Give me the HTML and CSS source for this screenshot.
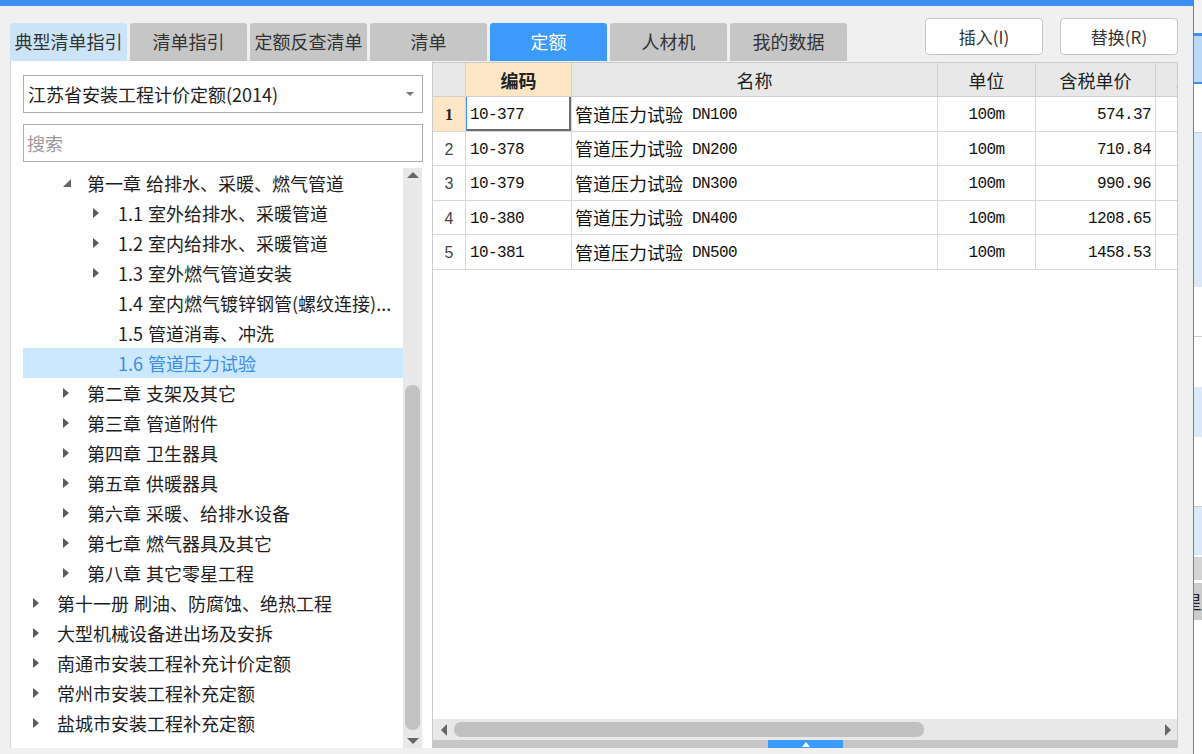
FILE: index.html
```html
<!DOCTYPE html>
<html lang="zh-CN">
<head>
<meta charset="utf-8">
<title>定额</title>
<link rel="stylesheet" href="styles.css">
</head>
<body>
<div class="screen">
  <div class="app">
    <div class="topbar"></div>
    <div class="toolbar">
      <div class="tabs">
        <div class="tab tab-light">典型清单指引</div>
        <div class="tab">清单指引</div>
        <div class="tab">定额反查清单</div>
        <div class="tab">清单</div>
        <div class="tab tab-active">定额</div>
        <div class="tab">人材机</div>
        <div class="tab">我的数据</div>
      </div>
      <div class="actions">
        <button class="btn">插入(I)</button>
        <button class="btn">替换(R)</button>
      </div>
    </div>
    <div class="main">
      <div class="left">
        <div class="select">
          <span>江苏省安装工程计价定额(2014)</span>
          <svg class="caret" width="8" height="4" viewBox="0 0 8 4"><path d="M0 0H8L4 4Z" fill="#777"/></svg>
        </div>
        <div class="search">搜索</div>
        <div class="treewrap">
          <div class="tree">
            <div class="trow l1"><span class="tw"><svg width="8" height="8" viewBox="0 0 8 8"><path d="M8 0V8H0Z" fill="#666"/></svg></span>第一章 给排水、采暖、燃气管道</div>
            <div class="trow l2"><span class="tw"><svg width="6" height="10" viewBox="0 0 6 10"><path d="M0 0L6 5L0 10Z" fill="#5c5c5c"/></svg></span>1.1 室外给排水、采暖管道</div>
            <div class="trow l2"><span class="tw"><svg width="6" height="10" viewBox="0 0 6 10"><path d="M0 0L6 5L0 10Z" fill="#5c5c5c"/></svg></span>1.2 室内给排水、采暖管道</div>
            <div class="trow l2"><span class="tw"><svg width="6" height="10" viewBox="0 0 6 10"><path d="M0 0L6 5L0 10Z" fill="#5c5c5c"/></svg></span>1.3 室外燃气管道安装</div>
            <div class="trow l2"><span class="tw"></span>1.4 室内燃气镀锌钢管(螺纹连接)...</div>
            <div class="trow l2"><span class="tw"></span>1.5 管道消毒、冲洗</div>
            <div class="trow l2 sel"><span class="tw"></span>1.6 管道压力试验</div>
            <div class="trow l1"><span class="tw"><svg width="6" height="10" viewBox="0 0 6 10"><path d="M0 0L6 5L0 10Z" fill="#5c5c5c"/></svg></span>第二章 支架及其它</div>
            <div class="trow l1"><span class="tw"><svg width="6" height="10" viewBox="0 0 6 10"><path d="M0 0L6 5L0 10Z" fill="#5c5c5c"/></svg></span>第三章 管道附件</div>
            <div class="trow l1"><span class="tw"><svg width="6" height="10" viewBox="0 0 6 10"><path d="M0 0L6 5L0 10Z" fill="#5c5c5c"/></svg></span>第四章 卫生器具</div>
            <div class="trow l1"><span class="tw"><svg width="6" height="10" viewBox="0 0 6 10"><path d="M0 0L6 5L0 10Z" fill="#5c5c5c"/></svg></span>第五章 供暖器具</div>
            <div class="trow l1"><span class="tw"><svg width="6" height="10" viewBox="0 0 6 10"><path d="M0 0L6 5L0 10Z" fill="#5c5c5c"/></svg></span>第六章 采暖、给排水设备</div>
            <div class="trow l1"><span class="tw"><svg width="6" height="10" viewBox="0 0 6 10"><path d="M0 0L6 5L0 10Z" fill="#5c5c5c"/></svg></span>第七章 燃气器具及其它</div>
            <div class="trow l1"><span class="tw"><svg width="6" height="10" viewBox="0 0 6 10"><path d="M0 0L6 5L0 10Z" fill="#5c5c5c"/></svg></span>第八章 其它零星工程</div>
            <div class="trow l0"><span class="tw"><svg width="6" height="10" viewBox="0 0 6 10"><path d="M0 0L6 5L0 10Z" fill="#5c5c5c"/></svg></span>第十一册 刷油、防腐蚀、绝热工程</div>
            <div class="trow l0"><span class="tw"><svg width="6" height="10" viewBox="0 0 6 10"><path d="M0 0L6 5L0 10Z" fill="#5c5c5c"/></svg></span>大型机械设备进出场及安拆</div>
            <div class="trow l0"><span class="tw"><svg width="6" height="10" viewBox="0 0 6 10"><path d="M0 0L6 5L0 10Z" fill="#5c5c5c"/></svg></span>南通市安装工程补充计价定额</div>
            <div class="trow l0"><span class="tw"><svg width="6" height="10" viewBox="0 0 6 10"><path d="M0 0L6 5L0 10Z" fill="#5c5c5c"/></svg></span>常州市安装工程补充定额</div>
            <div class="trow l0"><span class="tw"><svg width="6" height="10" viewBox="0 0 6 10"><path d="M0 0L6 5L0 10Z" fill="#5c5c5c"/></svg></span>盐城市安装工程补充定额</div>
          </div>
          <div class="vscroll">
            <svg class="vs-up" width="12" height="6" viewBox="0 0 12 6"><path d="M0 6L6 0L12 6Z" fill="#666"/></svg>
            <div class="vs-thumb"></div>
            <svg class="vs-down" width="12" height="6" viewBox="0 0 12 6"><path d="M0 0H12L6 6Z" fill="#666"/></svg>
          </div>
        </div>
      </div>
      <div class="right">
        <div class="grid">
          <div class="grow hrow">
            <div class="cell c0"></div>
            <div class="cell c1 hkey">编码</div>
            <div class="cell c2">名称</div>
            <div class="cell c3">单位</div>
            <div class="cell c4">含税单价</div>
            <div class="cell c5 hlast">工料机</div>
          </div>
          <div class="grow">
            <div class="cell c0 rn rn-cur">1</div>
            <div class="cell c1 mono focus">10-377</div>
            <div class="cell c2"><span class="cn">管道压力试验</span><span class="mono">&nbsp;DN100</span></div>
            <div class="cell c3 mono">100m</div>
            <div class="cell c4 mono num">574.37</div>
            <div class="cell c5"></div>
          </div>
          <div class="grow">
            <div class="cell c0 rn">2</div>
            <div class="cell c1 mono">10-378</div>
            <div class="cell c2"><span class="cn">管道压力试验</span><span class="mono">&nbsp;DN200</span></div>
            <div class="cell c3 mono">100m</div>
            <div class="cell c4 mono num">710.84</div>
            <div class="cell c5"></div>
          </div>
          <div class="grow">
            <div class="cell c0 rn">3</div>
            <div class="cell c1 mono">10-379</div>
            <div class="cell c2"><span class="cn">管道压力试验</span><span class="mono">&nbsp;DN300</span></div>
            <div class="cell c3 mono">100m</div>
            <div class="cell c4 mono num">990.96</div>
            <div class="cell c5"></div>
          </div>
          <div class="grow">
            <div class="cell c0 rn">4</div>
            <div class="cell c1 mono">10-380</div>
            <div class="cell c2"><span class="cn">管道压力试验</span><span class="mono">&nbsp;DN400</span></div>
            <div class="cell c3 mono">100m</div>
            <div class="cell c4 mono num">1208.65</div>
            <div class="cell c5"></div>
          </div>
          <div class="grow">
            <div class="cell c0 rn">5</div>
            <div class="cell c1 mono">10-381</div>
            <div class="cell c2"><span class="cn">管道压力试验</span><span class="mono">&nbsp;DN500</span></div>
            <div class="cell c3 mono">100m</div>
            <div class="cell c4 mono num">1458.53</div>
            <div class="cell c5"></div>
          </div>
        </div>
        <div class="hscroll">
          <svg class="hs-left" width="6" height="12" viewBox="0 0 6 12"><path d="M6 0V12L0 6Z" fill="#666"/></svg>
          <div class="hs-thumb"></div>
          <svg class="hs-right" width="6" height="12" viewBox="0 0 6 12"><path d="M0 0V12L6 6Z" fill="#666"/></svg>
        </div>
        <div class="splitter">
          <div class="splitter-tab"><svg width="8" height="5" viewBox="0 0 8 5"><path d="M0 5L4 0L8 5Z" fill="#fff"/></svg></div>
        </div>
      </div>
    </div>
  </div>
  <div class="sidewin">
    <div class="sw sw-top"></div>
    <div class="sw sw-blue"></div>
    <div class="sw sw-sel"></div>
    <div class="sw sw-blue2"></div>
    <div class="sw sw-white1"></div>
    <div class="sw sw-pale1"></div>
    <div class="sw sw-white2"></div>
    <div class="sw sw-pale2"></div>
    <div class="sw sw-white3"></div>
    <div class="sw sw-pale3"></div>
    <div class="sw sw-gray"></div>
    <div class="sw sw-label"><span>星</span></div>
    <div class="sw sw-rest"></div>
  </div>
</div>
</body>
</html>
```
FILE: styles.css
```css
* {
  box-sizing: border-box;
  margin: 0;
  padding: 0;
}

html, body {
  width: 1202px;
  height: 754px;
  overflow: hidden;
}

body {
  background: #f0f0f0;
  font-family: "Noto Sans CJK SC", "Microsoft YaHei", sans-serif;
  color: #222;
}

.screen {
  display: flex;
  width: 1202px;
  height: 754px;
}

.app {
  width: 1193px;
  flex: none;
  display: flex;
  flex-direction: column;
}

.topbar {
  height: 6px;
  flex: none;
  background: #3d8ff4;
}

.toolbar {
  height: 55px;
  flex: none;
  display: flex;
  padding: 0 15px 0 10px;
}

.tabs {
  display: flex;
  gap: 3px;
  align-self: flex-end;
}

.tab {
  width: 117px;
  height: 38px;
  line-height: 37px;
  text-align: center;
  font-size: 18px;
  color: #333;
  background: #c6c6c6;
  border-radius: 3px 3px 0 0;
}

.tab-light {
  background: #cce4f7;
}

.tab-active {
  background: #3c9bfa;
  color: #fff;
}

.actions {
  margin-left: auto;
  margin-top: 12px;
  display: flex;
  gap: 17px;
  height: 37px;
}

.btn {
  width: 118px;
  height: 37px;
  background: #fff;
  border: 1px solid #c6c6c6;
  border-radius: 4px;
  font-family: inherit;
  font-size: 17px;
  color: #333;
}

.main {
  height: 687px;
  flex: none;
  display: flex;
  padding-left: 10px;
}

.left {
  width: 422px;
  flex: none;
  background: #fff;
  border-left: 1px solid #d8d8d8;
  padding: 14px 0 0 12px;
  display: flex;
  flex-direction: column;
}

.select {
  width: 400px;
  height: 38px;
  flex: none;
  border: 1px solid #adadad;
  display: flex;
  align-items: center;
  padding-left: 4px;
  font-size: 18px;
  color: #222;
}

.caret {
  margin-left: auto;
  margin-right: 8px;
}

.search {
  width: 400px;
  height: 38px;
  flex: none;
  margin-top: 11px;
  border: 1px solid #adadad;
  padding-left: 3px;
  line-height: 36px;
  font-size: 18px;
  color: #9a9a9a;
}

.treewrap {
  margin-top: 6px;
  flex: 1;
  min-height: 0;
  display: flex;
}

.tree {
  width: 380px;
  flex: none;
}

.trow {
  height: 30px;
  display: flex;
  align-items: center;
  white-space: nowrap;
  font-size: 18px;
  color: #1e1e1e;
  word-spacing: 1px;
}

.trow.l0 { padding-left: 10px; }
.trow.l1 { padding-left: 40px; }
.trow.l2 { padding-left: 70px; }

.tw {
  width: 25px;
  flex: none;
  display: flex;
  align-items: center;
}

.trow.l0 .tw { width: 24px; }
.trow.l1 .tw { width: 24px; }

.trow.sel {
  background: #cce8ff;
  color: #3a8ee8;
}

.vscroll {
  width: 19px;
  flex: none;
  background: #e8e8e8;
  display: flex;
  flex-direction: column;
  align-items: center;
}

.vs-up {
  margin-top: 4px;
}

.vs-thumb {
  width: 15px;
  height: 345px;
  margin-top: 207px;
  border-radius: 7px;
  background: #c2c2c2;
}

.vs-down {
  margin-top: 8px;
}

.right {
  width: 746px;
  flex: none;
  margin-top: 1px;
  border: 1px solid #cbcbcb;
  border-bottom: none;
  background: #fff;
  display: flex;
  flex-direction: column;
}

.grid {
  flex: 1;
  overflow: hidden;
}

.grow {
  display: flex;
  height: 34.5px;
}

.grow.hrow {
  height: 34px;
}

.cell {
  flex: none;
  display: flex;
  align-items: center;
  border-right: 1px solid #d8d8d8;
  border-bottom: 1px solid #d8d8d8;
  white-space: nowrap;
  overflow: hidden;
  padding-top: 3px;
}

.c0 { width: 33px; justify-content: center; }
.c1 { width: 106px; padding-left: 4px; }
.c2 { width: 366px; padding-left: 3px; }
.c3 { width: 98px; justify-content: center; }
.c4 { width: 120px; justify-content: flex-end; padding-right: 4px; }
.c5 { width: 80px; }

.hrow .cell {
  background: #e8e8e8;
  border-color: #d0d0d0;
  justify-content: center;
  padding: 0;
  font-size: 18px;
  color: #222;
}

.hrow .hkey {
  background: #fde6c6;
  font-weight: bold;
}

.hrow .hlast {
  justify-content: flex-start;
  padding-left: 20px;
}

.mono {
  font-family: "Liberation Mono", "DejaVu Sans Mono", monospace;
  font-size: 16px;
  letter-spacing: -0.6px;
  color: #111;
}

.cn {
  font-size: 18px;
  color: #111;
  margin-top: -3px;
}

.rn {
  font-family: "Liberation Sans", sans-serif;
  font-size: 16px;
  color: #444;
}

.rn-cur {
  background: #fde6c6;
  font-family: "Liberation Serif", serif;
  font-weight: bold;
  color: #222;
}

.focus {
  box-shadow: inset 1px 0 0 #3d8ff4, inset -2px -2px 0 #6e6e6e;
}

.hscroll {
  height: 21px;
  flex: none;
  background: #e8e8e8;
  display: flex;
  align-items: center;
}

.hs-left {
  margin-left: 8px;
}

.hs-thumb {
  width: 470px;
  height: 15px;
  margin-left: 7px;
  border-radius: 7px;
  background: #c1c1c1;
}

.hs-right {
  margin-left: auto;
  margin-right: 6px;
}

.splitter {
  height: 8px;
  flex: none;
  background: #c6c6c6;
  display: flex;
}

.splitter-tab {
  width: 75px;
  margin-left: 335px;
  background: #3c9bfa;
  display: flex;
  justify-content: center;
  align-items: center;
}

.sidewin {
  width: 9px;
  flex: none;
  border-left: 1px solid #7f7f7f;
  background: #fff;
  display: flex;
  flex-direction: column;
  overflow: hidden;
}

.sw { flex: none; }
.sw-top { height: 33px; background: #f4f4f4; }
.sw-blue { height: 3px; background: #3d8ff4; }
.sw-sel { height: 46px; background: #bcd8f8; }
.sw-blue2 { height: 2px; background: #3d8ff4; }
.sw-white1 { height: 49px; background: #fff; border-bottom: 1px solid #cfcfcf; }
.sw-pale1 { height: 154px; background: #dde9f9; }
.sw-white2 { height: 50px; background: #fff; border-bottom: 1px solid #cfcfcf; }
.sw-pale2 { height: 100px; background: #dde9f9; border-top: 50px solid #fff; }
.sw-white3 { height: 70px; background: #fff; border-bottom: 1px solid #cfcfcf; }
.sw-pale3 { height: 48px; background: #dde9f9; }
.sw-gray { height: 25px; background: #d4d4d4; border-top: 2px solid #fff; }
.sw-label {
  height: 40px;
  background: #cccccc;
  border-top: 3px solid #fff;
  font-size: 18px;
  line-height: 36px;
  white-space: nowrap;
  color: #222;
}
.sw-label span { margin-left: -10px; }
.sw-rest { flex: 1; background: #fff; }
```
